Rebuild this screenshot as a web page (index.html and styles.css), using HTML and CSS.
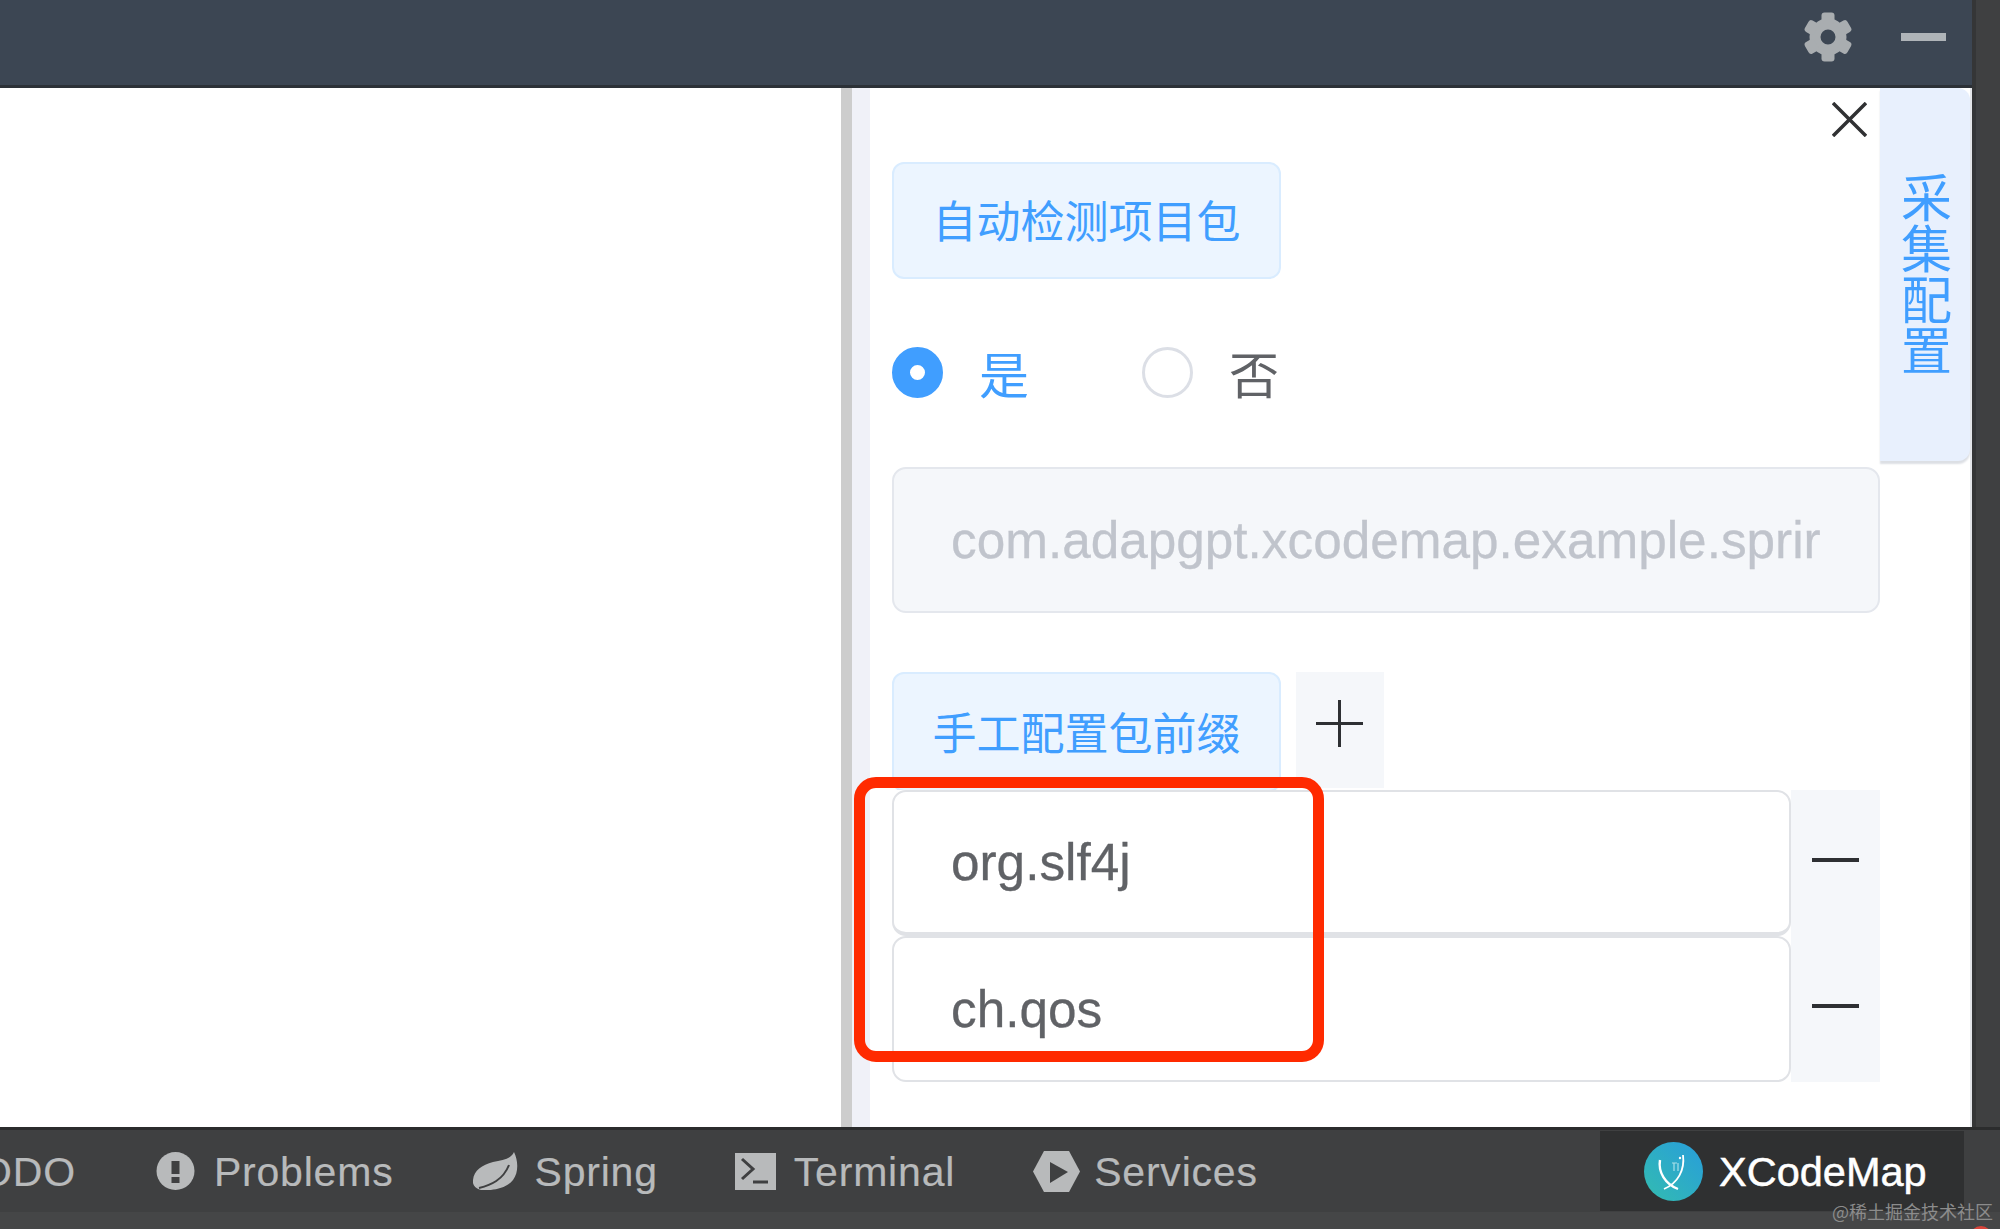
FILE: index.html
```html
<!DOCTYPE html>
<html lang="zh-CN">
<head>
    <meta charset="UTF-8">
    <meta name="viewport" content="width=device-width, initial-scale=1.0">
    <title>XCodeMap 采集配置</title>
    <link rel="stylesheet" href="styles.css">
</head>
<body>
<div class="page">
    <div class="workspace">
        <!-- 顶部栏 -->
        <div class="topbar">
            <svg class="gear" viewBox="-25 -25 50 50">
                <circle r="13" fill="none" stroke="#a9adb0" stroke-width="11"/>
                <g fill="#a9adb0">
                    <rect x="-6.5" y="-24.5" width="13" height="11" rx="3"/>
                    <rect x="-6.5" y="-24.5" width="13" height="11" rx="3" transform="rotate(60)"/>
                    <rect x="-6.5" y="-24.5" width="13" height="11" rx="3" transform="rotate(120)"/>
                    <rect x="-6.5" y="-24.5" width="13" height="11" rx="3" transform="rotate(180)"/>
                    <rect x="-6.5" y="-24.5" width="13" height="11" rx="3" transform="rotate(240)"/>
                    <rect x="-6.5" y="-24.5" width="13" height="11" rx="3" transform="rotate(300)"/>
                </g>
            </svg>
            <div class="hide-bar"></div>
        </div>

        <div class="content">
            <div class="canvas"></div>
            <div class="splitter"></div>
            <div class="gutter"></div>

            <!-- 配置面板 -->
            <div class="panel">
                <div class="form">
                    <div class="tag-btn">自动检测项目包</div>

                    <div class="radios">
                        <div class="radio checked"><span class="dot"></span>是</div>
                        <div class="radio"><span class="dot"></span>否</div>
                    </div>

                    <div class="field disabled">com.adapgpt.xcodemap.example.sprir</div>

                    <div class="manual">
                        <div class="tag-btn tall">手工配置包前缀</div>
                        <div class="add-btn">
                            <svg class="add-icon" viewBox="0 0 47 47"><path d="M23.5 0V47M0 23.5H47"/></svg>
                        </div>
                    </div>

                    <div class="pkg-row">
                        <div class="field first">org.slf4j</div>
                        <div class="del-btn"><span class="minus"></span></div>
                    </div>
                    <div class="pkg-row">
                        <div class="field">ch.qos</div>
                        <div class="del-btn"><span class="minus"></span></div>
                    </div>
                </div>

                <svg class="close" viewBox="0 0 35 35"><path d="M1 1L34 34M34 1L1 34"/></svg>
                <div class="side-tab">采集配置</div>
            </div>
        </div>
    </div>

    <!-- 底部工具栏 -->
    <div class="toolbar">
        <div class="tabs">
            <div class="tab todo"><span class="label">TODO</span></div>
            <div class="tab">
                <svg class="icon problems" viewBox="0 0 39 38">
                    <circle cx="19.5" cy="19" r="19" fill="#b8babb"/>
                    <rect x="15.5" y="9" width="8" height="13" fill="#3f4041"/>
                    <rect x="15.5" y="25" width="8" height="6" fill="#3f4041"/>
                </svg>
                <span class="label">Problems</span>
            </div>
            <div class="tab tab-spring">
                <svg class="icon spring" viewBox="0 0 45 38">
                    <path d="M41 0C45 8 46 20 40 28C33 37 18 39 8 38C3 37-1 33 0 28C1 18 9 13 20 10C30 8 38 7 41 0Z" fill="#b8babb"/>
                    <path d="M6 36C18 33 30 28 36 13" fill="none" stroke="#3f4041" stroke-width="2"/>
                </svg>
                <span class="label">Spring</span>
            </div>
            <div class="tab tab-terminal">
                <svg class="icon terminal" viewBox="0 0 41 37">
                    <rect width="41" height="37" fill="#b8babb"/>
                    <path d="M7 6L18 16L7 26M18 29H33" fill="none" stroke="#3f4041" stroke-width="3"/>
                </svg>
                <span class="label">Terminal</span>
            </div>
            <div class="tab">
                <svg class="icon services" viewBox="0 0 47 41">
                    <path d="M0 20.5L11 0H36L47 20.5L36 41H11Z" fill="#b8babb"/>
                    <path d="M17 11L35 21L17 32Z" fill="#3f4041"/>
                </svg>
                <span class="label">Services</span>
            </div>
            <div class="xcodemap">
                <svg class="logo" viewBox="0 0 59 59">
                    <defs>
                        <linearGradient id="logoFill" x1="0" y1="1" x2="1" y2="0">
                            <stop offset="0" stop-color="#33bcb0"/>
                            <stop offset="1" stop-color="#289ddb"/>
                        </linearGradient>
                    </defs>
                    <circle cx="29.5" cy="29.5" r="29.5" fill="url(#logoFill)"/>
                    <path d="M16 18C14 30 21 42 34 47" fill="none" stroke="#fff" stroke-width="2.4"/>
                    <path d="M39 13C41 28 34 41 20 47" fill="none" stroke="#fff" stroke-width="1.8"/>
                    <path d="M28 21H33M30 21V29M34 21V29" fill="none" stroke="#a8e0e8" stroke-width="1.2"/>
                    <circle cx="36" cy="16" r="1.2" fill="#fff"/>
                </svg>
                <span class="label">XCodeMap</span>
            </div>
        </div>
        <div class="toolbar-foot"></div>
    </div>

    <!-- 标注与水印 -->
    <div class="highlight"></div>
    <div class="watermark">@稀土掘金技术社区</div>
    <div class="badge"></div>
</div>
</body>
</html>
```

FILE: styles.css
```css
* {
    box-sizing: border-box;
}
html, body {
    margin: 0;
    padding: 0;
}
body {
    background-color: #3f4041;
    font-family: "Liberation Sans", "Noto Sans CJK SC", sans-serif;
}
.page {
    position: relative;
    width: 2000px;
    height: 1229px;
    overflow: hidden;
    display: flex;
    flex-direction: column;
}
.workspace {
    width: 1976px;
    height: 1127px;
    border-right: 4px solid #353637;
    display: flex;
    flex-direction: column;
}

/* 顶部栏 */
.topbar {
    height: 88px;
    flex: none;
    background-color: #3c4653;
    border-bottom: 3px solid #2c3137;
    display: flex;
    align-items: center;
    justify-content: flex-end;
    padding: 0 26px 12px 0;
}
.gear {
    width: 50px;
    height: 50px;
    margin-right: 48px;
}
.hide-bar {
    width: 45px;
    height: 8px;
    background-color: #afb4b8;
}

.content {
    flex: 1;
    display: flex;
    background-color: #fff;
}
.canvas {
    width: 841px;
}
.splitter {
    width: 11px;
    background-color: #cdcdcd;
}
.gutter {
    width: 18px;
    background-color: #f0f1f8;
}

/* 配置面板 */
.panel {
    position: relative;
    flex: 1;
    display: flex;
    align-items: flex-start;
    padding-left: 22px;
    border-right: 2px solid #e4e6ea;
}
.form {
    width: 988px;
    padding-top: 74px;
}
.tag-btn {
    width: 389px;
    height: 117px;
    padding-bottom: 4px;
    display: flex;
    align-items: center;
    justify-content: center;
    background-color: #ecf5ff;
    border: 2px solid #d9ecff;
    border-radius: 12px;
    color: #409eff;
    font-size: 44px;
    font-family: "Noto Sans CJK SC", sans-serif;
}
.tag-btn.tall {
    height: 120px;
    flex: none;
    padding-bottom: 2px;
}
.radios {
    display: flex;
    gap: 113px;
    margin-top: 68px;
    height: 51px;
}
.radio {
    display: flex;
    align-items: center;
    gap: 36px;
    color: #606266;
    font-size: 50px;
    line-height: 51px;
    font-family: "Noto Sans CJK SC", sans-serif;
}
.radio .dot {
    width: 51px;
    height: 51px;
    flex: none;
    border: 3px solid #dcdfe6;
    border-radius: 50%;
    background-color: #fff;
}
.radio.checked {
    color: #409eff;
}
.radio.checked .dot {
    border: 18px solid #409eff;
}
.field {
    flex: 1;
    height: 146px;
    padding: 0 57px;
    display: flex;
    align-items: center;
    overflow: hidden;
    white-space: nowrap;
    border: 2px solid #e0e2e6;
    border-radius: 14px;
    background-color: #fff;
    color: #606266;
    font-size: 51.3px;
    -webkit-text-stroke: 0.3px;
}
.field.disabled {
    margin-top: 69px;
    background-color: #f5f7fa;
    border-color: #e4e7ed;
    color: #c0c4cc;
}
.field.first {
    border-bottom-width: 4px;
}
.manual {
    display: flex;
    gap: 15px;
    height: 118px;
    margin-top: 59px;
    overflow: hidden;
}
.add-btn {
    width: 88px;
    height: 116px;
    background-color: #f5f7fa;
    padding: 28px 0 0 20px;
}
.add-icon {
    display: block;
    width: 47px;
    height: 47px;
    fill: none;
    stroke: #2e3033;
    stroke-width: 3;
}
.pkg-row {
    display: flex;
}
.del-btn {
    width: 89px;
    flex: none;
    background-color: #f5f7fa;
    display: flex;
    align-items: center;
    justify-content: center;
}
.minus {
    width: 47px;
    height: 4px;
    background-color: #2e3033;
    margin-bottom: 7px;
}
.close {
    position: absolute;
    top: 14px;
    right: 103px;
    width: 35px;
    height: 35px;
    fill: none;
    stroke: #303133;
    stroke-width: 3.5;
}
.side-tab {
    width: 90px;
    height: 373px;
    flex: none;
    padding: 82px 0 0 3px;
    text-align: center;
    background-color: #e8f0fd;
    border-radius: 0 12px 12px 0;
    box-shadow: 0 3px 2px #dcdfe4;
    color: #409eff;
    font-size: 51px;
    line-height: 51px;
    font-family: "Noto Sans CJK SC", sans-serif;
}

/* 底部工具栏 */
.toolbar {
    flex: 1;
    display: flex;
    flex-direction: column;
    border-top: 3px solid #2b2c2d;
    background-color: #3f4041;
}
.tabs {
    height: 82px;
    display: flex;
    align-items: center;
    margin-left: -45px;
}
.tab {
    display: flex;
    align-items: center;
    margin-right: 80px;
    color: #b8babb;
    font-size: 41px;
    letter-spacing: 0.8px;
    -webkit-text-stroke: 0.2px;
}
.tab-spring {
    margin-right: 77px;
}
.tab-terminal {
    margin-right: 78px;
}
.label {
    margin-top: 2px;
}
.icon {
    flex: none;
}
.problems {
    width: 39px;
    height: 38px;
    margin-right: 19px;
}
.spring {
    width: 45px;
    height: 38px;
    margin-right: 16px;
}
.terminal {
    width: 41px;
    height: 37px;
    margin-right: 18px;
}
.services {
    width: 47px;
    height: 41px;
    margin-right: 14px;
}
.xcodemap {
    width: 364px;
    height: 80px;
    margin-left: auto;
    margin-right: 36px;
    padding-left: 44px;
    display: flex;
    align-items: center;
    gap: 16px;
    background-color: #2f3031;
    color: #fff;
    font-size: 41.5px;
    -webkit-text-stroke: 0.5px;
}
.logo {
    width: 59px;
    height: 59px;
    flex: none;
}
.toolbar-foot {
    flex: 1;
    background-color: #454647;
}

/* 标注与水印 */
.highlight {
    position: absolute;
    left: 854px;
    top: 777px;
    width: 470px;
    height: 285px;
    border: 11px solid #ff2a00;
    border-radius: 22px;
}
.watermark {
    position: absolute;
    left: 1832px;
    top: 1200px;
    color: #8c8c8c;
    font-size: 18px;
    line-height: 22px;
    font-family: "Noto Sans CJK SC", sans-serif;
}
.badge {
    position: absolute;
    left: 1970px;
    top: 1226px;
    width: 22px;
    height: 22px;
    border-radius: 50%;
    background-color: #d9443a;
}
```
